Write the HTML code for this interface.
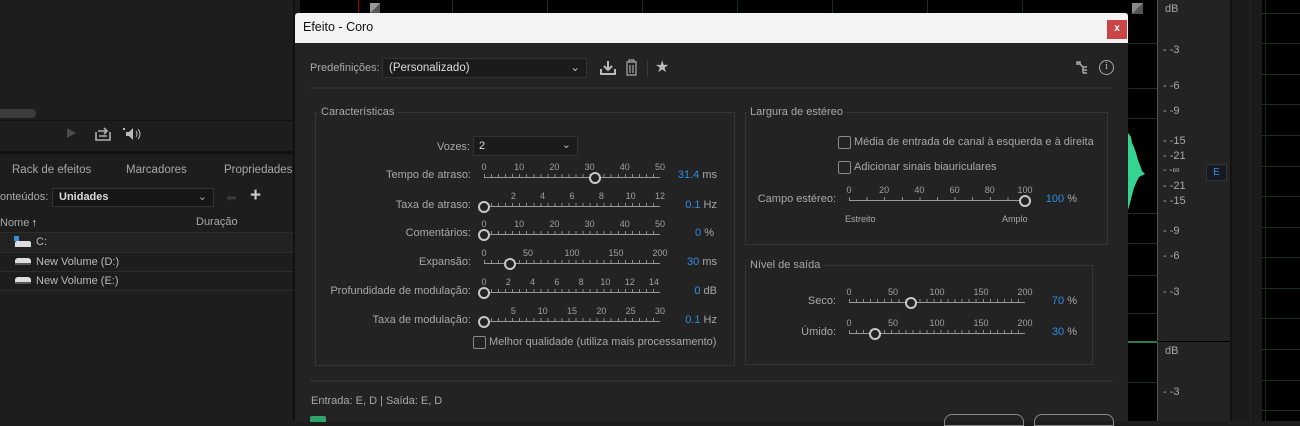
<!DOCTYPE html>
<html><head><meta charset="utf-8">
<style>
*{margin:0;padding:0;box-sizing:border-box}
body{width:1300px;height:421px;overflow:hidden;background:#1d1d1d;font-family:"Liberation Sans",sans-serif;font-size:11px;color:#a8a8a8;position:relative}
.a{position:absolute;white-space:nowrap}
.r{text-align:right}
.sl{position:absolute;width:176px;height:24px}
.sl .ln{position:absolute;left:0;right:0;top:15px;height:1px;background:#9a9a9a}
.sl .tk{position:absolute;left:0;right:0;top:12px;height:3px;background:repeating-linear-gradient(90deg,#8a8a8a 0 1px,transparent 1px 7.04px)}
.sl .lb{position:absolute;top:0;font-size:9px;color:#a0a0a0;transform:translateX(-50%)}
.sl .th{position:absolute;top:10px;width:12px;height:12px;border:2px solid #c8c8c8;border-radius:50%;background:#232323;transform:translateX(-50%)}
.v{color:#2f8de4}
.cb{position:absolute;width:13px;height:13px;border:1px solid #8a8a8a;border-radius:2px}
.box{position:absolute;border:1px solid #363636}
.grid{position:absolute;background:#17301a}
</style></head><body>

<!-- left panel -->
<div class="a" style="left:0;top:109px;width:36px;height:9px;background:#3c3c3c;border-radius:0 4px 4px 0"></div>
<div class="a" style="left:0;top:120px;width:294px;height:1px;background:#111"></div>
<div class="a" style="left:0;top:151px;width:294px;height:3px;background:#111"></div>
<div class="a" style="left:67px;top:128px;width:0;height:0;border-left:9px solid #4a4a4a;border-top:5px solid transparent;border-bottom:5px solid transparent"></div>
<svg class="a" style="left:95px;top:127px" width="16" height="14"><path d="M1 5v8h14V5M4 9h8M9 1l3 3-3 3M3 4h9" fill="none" stroke="#b0b0b0" stroke-width="1.6"/></svg>
<svg class="a" style="left:122px;top:127px" width="22" height="14"><path d="M1 1h2v2H1z" fill="#bbb"/><path d="M4 5h3l4-4v12l-4-4H4z" fill="#bbb"/><path d="M14 4q2 3 0 6M16 2q4 5 0 10" stroke="#bbb" fill="none"/></svg>
<div class="a" style="left:12px;top:164px;font-size:11.5px">Rack de efeitos</div>
<div class="a" style="left:126px;top:164px;font-size:11.5px">Marcadores</div>
<div class="a" style="left:224px;top:164px;font-size:11.5px">Propriedades</div>
<div class="a" style="left:0;top:191px">onteúdos:</div>
<div class="a" style="left:52px;top:188px;width:162px;height:19px;background:#161616;border:1px solid #333;color:#ddd;padding:2px 0 0 6px;font-weight:bold">Unidades<span style="position:absolute;right:6px;top:1px;color:#aaa;font-weight:normal">⌄</span></div>
<div class="a" style="left:226px;top:190px;color:#3a3a3a;font-size:13px">⬅</div>
<div class="a" style="left:250px;top:185px;color:#ccc;font-size:19px;font-weight:bold">+</div>
<div class="a" style="left:0;top:216px">Nome <span style="font-size:9px">🠕</span></div>
<div class="a" style="left:196px;top:216px">Duração</div>
<div class="a" style="left:0;top:232px;width:294px;height:1px;background:#2c2c2c"></div>
<div class="a" style="left:0;top:233px;width:294px;height:19px;background:#222"></div>
<div class="a" style="left:0;top:252px;width:294px;height:1px;background:#2c2c2c"></div>
<div class="a" style="left:0;top:271px;width:294px;height:1px;background:#2c2c2c"></div>
<div class="a" style="left:0;top:290px;width:294px;height:1px;background:#2c2c2c"></div>
<div class="a" style="left:14px;top:236px;width:5px;height:5px;background:#3a8fd8"></div>
<div class="a" style="left:15px;top:241px;width:16px;height:6px;background:#ddd;border-radius:2px 2px 0 0"></div>
<div class="a" style="left:36px;top:236px;color:#bbb">C:</div>
<div class="a" style="left:15px;top:258px;width:16px;height:7px;background:#ddd;border-radius:3px 3px 0 0;border-bottom:2px solid #555"></div>
<div class="a" style="left:36px;top:256px;color:#bbb">New Volume (D:)</div>
<div class="a" style="left:15px;top:277px;width:16px;height:7px;background:#ddd;border-radius:3px 3px 0 0;border-bottom:2px solid #555"></div>
<div class="a" style="left:36px;top:275px;color:#bbb">New Volume (E:)</div>
<div class="a" style="left:293px;top:0;width:2px;height:421px;background:#111"></div>

<!-- top black strip / waveform area -->
<div class="a" style="left:295px;top:0;width:862px;height:421px;background:#000"></div>
<div class="a" style="left:295px;top:0;width:5px;height:421px;background:#1a1a1a"></div>
<div class="a" style="left:358px;top:0;width:1px;height:13px;background:#a00"></div>
<div class="a" style="left:370px;top:3px;width:10px;height:10px;background:linear-gradient(135deg,#999 50%,#555 50%)"></div>
<div class="grid" style="left:452px;top:0;width:1px;height:13px"></div>
<div class="grid" style="left:547px;top:0;width:1px;height:13px"></div>
<div class="grid" style="left:642px;top:0;width:1px;height:13px"></div>
<div class="grid" style="left:737px;top:0;width:1px;height:13px"></div>
<div class="grid" style="left:832px;top:0;width:1px;height:13px"></div>
<div class="grid" style="left:927px;top:0;width:1px;height:13px"></div>
<div class="grid" style="left:1022px;top:0;width:1px;height:13px"></div>
<div class="grid" style="left:1128px;top:43px;width:29px;height:1px"></div>
<div class="grid" style="left:1128px;top:88px;width:29px;height:1px"></div>
<div class="grid" style="left:1128px;top:118px;width:29px;height:1px"></div>
<div class="grid" style="left:1128px;top:213px;width:29px;height:1px"></div>
<div class="grid" style="left:1128px;top:243px;width:29px;height:1px"></div>
<div class="grid" style="left:1128px;top:275px;width:29px;height:1px"></div>
<div class="grid" style="left:1128px;top:313px;width:29px;height:1px"></div>
<div class="grid" style="left:1128px;top:382px;width:29px;height:1px"></div>
<div class="a" style="left:1132px;top:3px;width:11px;height:11px;background:linear-gradient(135deg,#888 50%,#555 50%)"></div>
<svg class="a" style="left:1128px;top:125px" width="30" height="100"><path d="M0 8L3 12L4 18L6 22L8 28L10 35L12 40L14 46L17 49L11 52L8 58L6 63L4 70L2 78L0 85Z" fill="#35d492"/></svg>
<div class="a" style="left:1128px;top:341px;width:29px;height:2px;background:#2a7a55"></div>

<!-- ruler -->
<div class="a" style="left:1157px;top:0;width:73px;height:421px;background:#232323;border-left:1px solid #555"></div>
<div class="a" style="left:1157px;top:341px;width:73px;height:1px;background:#000"></div>
<div class="a" style="left:1165px;top:3px">dB</div>
<div class="a" style="left:1163px;top:44px">- -3</div>
<div class="a" style="left:1163px;top:80px">- -6</div>
<div class="a" style="left:1163px;top:105px">- -9</div>
<div class="a" style="left:1163px;top:135px">- -15</div>
<div class="a" style="left:1163px;top:150px">- -21</div>
<div class="a" style="left:1163px;top:165px;font-size:10px">- -∞</div>
<div class="a" style="left:1163px;top:180px">- -21</div>
<div class="a" style="left:1163px;top:195px">- -15</div>
<div class="a" style="left:1163px;top:225px">- -9</div>
<div class="a" style="left:1163px;top:250px">- -6</div>
<div class="a" style="left:1163px;top:286px">- -3</div>
<div class="a" style="left:1165px;top:345px">dB</div>
<div class="a" style="left:1163px;top:386px">- -3</div>
<div class="a" style="left:1206px;top:164px;width:21px;height:17px;background:#151a22;border:1px solid #333;color:#3d8ee0;font-size:10px;text-align:center;padding-top:2px">E</div>
<div class="a" style="left:1230px;top:0;width:32px;height:421px;background:#1b1b1b;border-left:2px solid #111"></div>
<div class="a" style="left:1250px;top:0;width:1px;height:421px;background:#262626"></div>
<div class="a" style="left:1262px;top:0;width:38px;height:421px;background:#000"></div>
<div class="grid" style="left:1262px;top:13px;width:38px;height:1px"></div>
<div class="grid" style="left:1262px;top:43px;width:38px;height:1px"></div>
<div class="grid" style="left:1262px;top:74px;width:38px;height:1px"></div>
<div class="grid" style="left:1262px;top:104px;width:38px;height:1px"></div>
<div class="grid" style="left:1262px;top:135px;width:38px;height:1px"></div>
<div class="grid" style="left:1262px;top:166px;width:38px;height:1px"></div>
<div class="grid" style="left:1262px;top:196px;width:38px;height:1px"></div>
<div class="grid" style="left:1262px;top:227px;width:38px;height:1px"></div>
<div class="grid" style="left:1262px;top:257px;width:38px;height:1px"></div>
<div class="grid" style="left:1262px;top:288px;width:38px;height:1px"></div>
<div class="grid" style="left:1262px;top:318px;width:38px;height:1px"></div>
<div class="grid" style="left:1262px;top:349px;width:38px;height:1px"></div>
<div class="grid" style="left:1262px;top:380px;width:38px;height:1px"></div>
<div class="grid" style="left:1262px;top:410px;width:38px;height:1px"></div>
<div class="grid" style="left:1265px;top:0;width:1px;height:421px"></div>

<!-- dialog -->
<div class="a" style="left:295px;top:13px;width:833px;height:408px;background:#232323"></div>
<div class="a" style="left:295px;top:13px;width:833px;height:30px;background:#f3f3f3;border-radius:3px 3px 0 0"></div>
<div class="a" style="left:303px;top:20px;color:#111;font-size:12.5px">Efeito - Coro</div>
<div class="a" style="left:1107px;top:20px;width:20px;height:19px;background:#c94545;color:#fff;font-size:10px;font-weight:bold;text-align:center;padding-top:3px">x</div>

<div class="a" style="left:310px;top:62px">Predefinições:</div>
<div class="a" style="left:382px;top:58px;width:205px;height:20px;background:#1b1b1b;border:1px solid #333;color:#ddd;padding:3px 0 0 6px;font-size:11.5px">(Personalizado)<span style="position:absolute;right:6px;top:1px;color:#bbb">⌄</span></div>
<svg class="a" style="left:600px;top:60px" width="16" height="16"><path d="M8 1v8M4 6l4 4 4-4" stroke="#bbb" stroke-width="2" fill="none"/><path d="M1 9v5h14V9" stroke="#bbb" stroke-width="2" fill="none"/></svg>
<svg class="a" style="left:625px;top:59px" width="13" height="17"><path d="M1 3h11M4 3V1h5v2M2 4v12h9V4M5 6v8M8 6v8" stroke="#aaa" stroke-width="1.2" fill="none"/></svg>
<div class="a" style="left:647px;top:60px;width:1px;height:17px;background:#3a3a3a"></div>
<div class="a" style="left:655px;top:57px;color:#bbb;font-size:16px">★</div>
<svg class="a" style="left:1076px;top:61px" width="14" height="14"><path d="M1 1h3v2H1zM4 3l3 3v6M7 6h4M7 9h4M7 12h4" stroke="#aaa" stroke-width="1.5" fill="none"/></svg>
<div class="a" style="left:1099px;top:60px;width:15px;height:15px;border:1.5px solid #aaa;border-radius:50%;color:#bbb;font-size:10px;text-align:center;line-height:12px;font-family:'Liberation Serif',serif">i</div>
<div class="a" style="left:310px;top:87px;width:803px;height:2px;background:#2e2e2e"></div>

<!-- Caracteristicas -->
<div class="box" style="left:315px;top:112px;width:420px;height:254px"></div>
<div class="a" style="left:318px;top:106px;background:#232323;padding:0 3px">Características</div>
<div class="a r" style="left:380px;top:141px;width:90px">Vozes:</div>
<div class="a" style="left:473px;top:136px;width:105px;height:20px;background:#1b1b1b;border:1px solid #333;color:#ddd;padding:3px 0 0 5px">2<span style="position:absolute;right:6px;top:1px;color:#bbb">⌄</span></div>

<div class="a r" style="left:250px;top:169px;width:221px">Tempo de atraso:</div>
<div class="sl" style="left:484px;top:162px"><div class="tk"></div><div class="ln"></div>
<span class="lb" style="left:0">0</span><span class="lb" style="left:20%">10</span><span class="lb" style="left:40%">20</span><span class="lb" style="left:60%">30</span><span class="lb" style="left:80%">40</span><span class="lb" style="left:100%">50</span><div class="th" style="left:62.8%"></div></div>
<div class="a r" style="left:640px;top:169px;width:77px"><span class="v">31.4</span> ms</div>

<div class="a r" style="left:250px;top:199px;width:221px">Taxa de atraso:</div>
<div class="sl" style="left:484px;top:191px"><div class="tk"></div><div class="ln"></div>
<span class="lb" style="left:16.7%">2</span><span class="lb" style="left:33.3%">4</span><span class="lb" style="left:50%">6</span><span class="lb" style="left:66.7%">8</span><span class="lb" style="left:83.3%">10</span><span class="lb" style="left:100%">12</span><div class="th" style="left:0"></div></div>
<div class="a r" style="left:640px;top:199px;width:77px"><span class="v">0.1</span> Hz</div>

<div class="a r" style="left:250px;top:227px;width:221px">Comentários:</div>
<div class="sl" style="left:484px;top:219px"><div class="tk"></div><div class="ln"></div>
<span class="lb" style="left:0">0</span><span class="lb" style="left:20%">10</span><span class="lb" style="left:40%">20</span><span class="lb" style="left:60%">30</span><span class="lb" style="left:80%">40</span><span class="lb" style="left:100%">50</span><div class="th" style="left:0"></div></div>
<div class="a r" style="left:640px;top:227px;width:74px"><span class="v">0</span> %</div>

<div class="a r" style="left:250px;top:256px;width:221px">Expansão:</div>
<div class="sl" style="left:484px;top:248px"><div class="tk"></div><div class="ln"></div>
<span class="lb" style="left:0">0</span><span class="lb" style="left:25%">50</span><span class="lb" style="left:50%">100</span><span class="lb" style="left:75%">150</span><span class="lb" style="left:100%">200</span><div class="th" style="left:15%"></div></div>
<div class="a r" style="left:640px;top:256px;width:77px"><span class="v">30</span> ms</div>

<div class="a r" style="left:250px;top:285px;width:221px">Profundidade de modulação:</div>
<div class="sl" style="left:484px;top:277px"><div class="tk"></div><div class="ln"></div>
<span class="lb" style="left:0">0</span><span class="lb" style="left:13.8%">2</span><span class="lb" style="left:27.6%">4</span><span class="lb" style="left:41.4%">6</span><span class="lb" style="left:55.2%">8</span><span class="lb" style="left:69%">10</span><span class="lb" style="left:82.8%">12</span><span class="lb" style="left:96.6%">14</span><div class="th" style="left:0"></div></div>
<div class="a r" style="left:640px;top:285px;width:77px"><span class="v">0</span> dB</div>

<div class="a r" style="left:250px;top:314px;width:221px">Taxa de modulação:</div>
<div class="sl" style="left:484px;top:306px"><div class="tk"></div><div class="ln"></div>
<span class="lb" style="left:16.7%">5</span><span class="lb" style="left:33.3%">10</span><span class="lb" style="left:50%">15</span><span class="lb" style="left:66.7%">20</span><span class="lb" style="left:83.3%">25</span><span class="lb" style="left:100%">30</span><div class="th" style="left:0"></div></div>
<div class="a r" style="left:640px;top:314px;width:77px"><span class="v">0.1</span> Hz</div>

<div class="cb" style="left:473px;top:336px"></div>
<div class="a" style="left:489px;top:336px">Melhor qualidade (utiliza mais processamento)</div>

<!-- Largura -->
<div class="box" style="left:745px;top:112px;width:363px;height:133px"></div>
<div class="a" style="left:747px;top:106px;background:#232323;padding:0 3px">Largura de estéreo</div>
<div class="cb" style="left:838px;top:136px"></div>
<div class="a" style="left:854px;top:136px">Média de entrada de canal à esquerda e à direita</div>
<div class="cb" style="left:838px;top:161px"></div>
<div class="a" style="left:854px;top:161px">Adicionar sinais biauriculares</div>
<div class="a r" style="left:740px;top:193px;width:96px">Campo estéreo:</div>
<div class="sl" style="left:849px;top:185px"><div class="tk" style="background:repeating-linear-gradient(90deg,#8a8a8a 0 1px,transparent 1px 17.6px)"></div><div class="ln"></div>
<span class="lb" style="left:0">0</span><span class="lb" style="left:20%">20</span><span class="lb" style="left:40%">40</span><span class="lb" style="left:60%">60</span><span class="lb" style="left:80%">80</span><span class="lb" style="left:100%">100</span><div class="th" style="left:100%"></div></div>
<div class="a" style="left:845px;top:214px;font-size:9px">Estreito</div>
<div class="a" style="left:1002px;top:214px;font-size:9px">Amplo</div>
<div class="a r" style="left:1020px;top:193px;width:57px"><span class="v">100</span> %</div>

<!-- Nivel -->
<div class="box" style="left:745px;top:265px;width:348px;height:100px"></div>
<div class="a" style="left:747px;top:259px;background:#232323;padding:0 3px">Nível de saída</div>
<div class="a r" style="left:740px;top:295px;width:96px">Seco:</div>
<div class="sl" style="left:849px;top:287px"><div class="tk"></div><div class="ln"></div>
<span class="lb" style="left:0">0</span><span class="lb" style="left:25%">50</span><span class="lb" style="left:50%">100</span><span class="lb" style="left:75%">150</span><span class="lb" style="left:100%">200</span><div class="th" style="left:35%"></div></div>
<div class="a r" style="left:1020px;top:295px;width:57px"><span class="v">70</span> %</div>
<div class="a r" style="left:740px;top:326px;width:96px">Úmido:</div>
<div class="sl" style="left:849px;top:318px"><div class="tk"></div><div class="ln"></div>
<span class="lb" style="left:0">0</span><span class="lb" style="left:25%">50</span><span class="lb" style="left:50%">100</span><span class="lb" style="left:75%">150</span><span class="lb" style="left:100%">200</span><div class="th" style="left:15%"></div></div>
<div class="a r" style="left:1020px;top:326px;width:57px"><span class="v">30</span> %</div>

<div class="a" style="left:310px;top:380px;width:803px;height:2px;background:#2e2e2e"></div>
<div class="a" style="left:311px;top:395px">Entrada: E, D | Saída: E, D</div>
<div class="a" style="left:310px;top:416px;width:16px;height:6px;background:#2fa36b;border-radius:2px 2px 0 0"></div>
<div class="a" style="left:944px;top:414px;width:80px;height:12px;border:1.5px solid #8a8a8a;border-radius:8px 8px 0 0"></div>
<div class="a" style="left:1034px;top:414px;width:80px;height:12px;border:1.5px solid #8a8a8a;border-radius:8px 8px 0 0"></div>
</body></html>
